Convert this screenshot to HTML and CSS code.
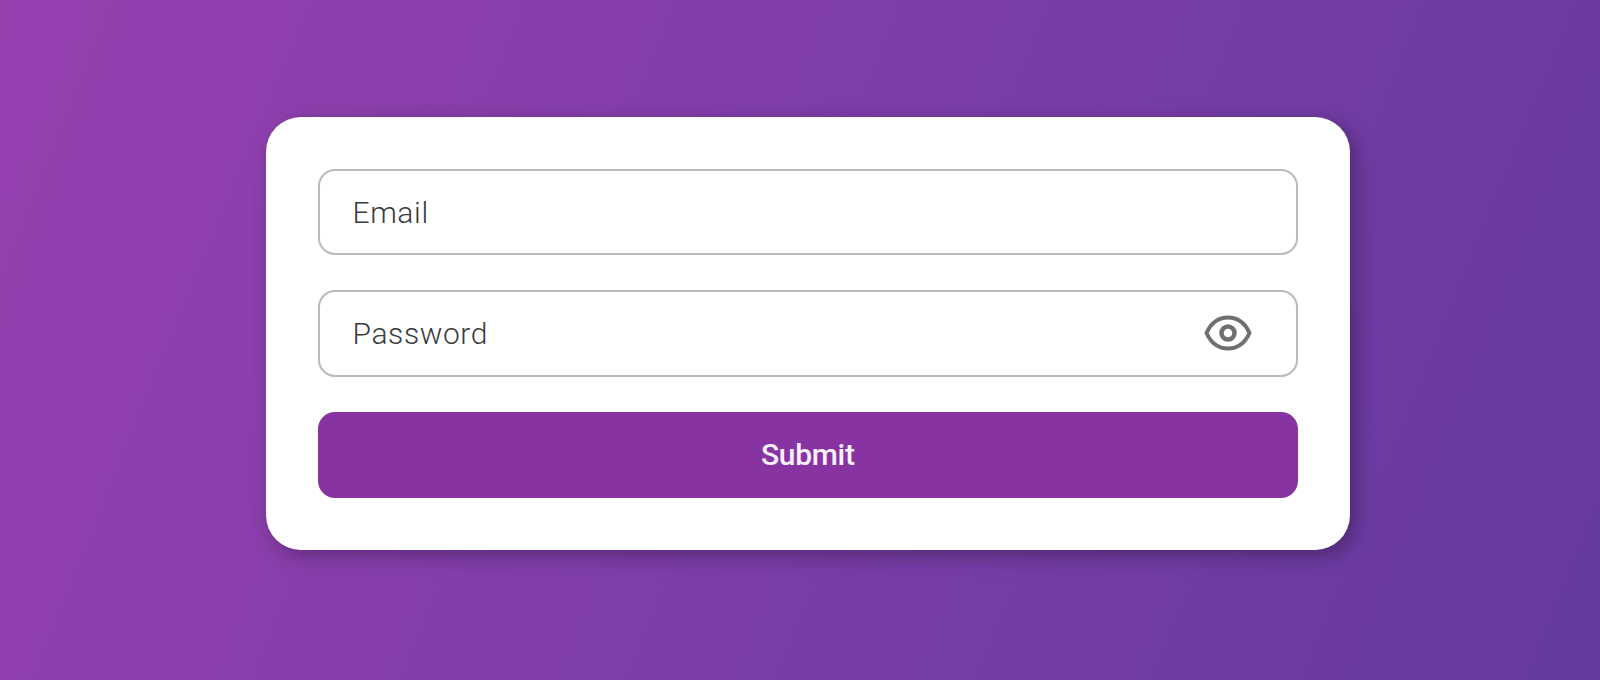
FILE: index.html
```
<!DOCTYPE html>
<html lang="en">
<head>
<meta charset="utf-8">
<title>Sign in</title>
<link rel="stylesheet" href="styles.css">
</head>
<body>
<form class="card">
  <div class="field"><span class="label">Email</span></div>
  <div class="field">
    <span class="label">Password</span>
    <svg class="eye" width="48" height="36" viewBox="0 0 48 36" fill="none" stroke="#707070" stroke-width="4">
      <path d="M2.500 18C7 8 14.500 2.500 24 2.500S41 8 45.500 18C41 28 33.500 33.500 24 33.500S7 28 2.500 18Z" stroke-linejoin="round"/>
      <circle cx="24" cy="18" r="6.500" stroke-width="4.500"/>
    </svg>
  </div>
  <button class="submit" type="button">Submit</button>
</form>
</body>
</html>
```

FILE: styles.css
```
* { box-sizing: border-box; }
body {
  margin: 0;
  height: 680px;
  overflow: hidden;
  display: flex;
  justify-content: center;
  align-items: flex-start;
  padding: 116.5px 0 0 15.5px;
  font-family: Roboto, sans-serif;
  background: linear-gradient(112deg, #9640b0, #643a9f);
}
.card {
  width: 1083.5px;
  height: 433.5px;
  padding: 52px;
  display: flex;
  flex-direction: column;
  gap: 35px;
  background: #fff;
  border-radius: 35px;
  box-shadow: 6px 6px 20px rgba(0, 0, 0, .3);
}
.field {
  height: 86.5px;
  flex: none;
  display: flex;
  align-items: center;
  justify-content: space-between;
  padding: 0 44px 0 32.5px;
  border: 2px solid #bababa;
  border-radius: 17px;
}
.label {
  padding-top: 1px;
  font-size: 30px;
  font-weight: 300;
  letter-spacing: 0.6px;
  color: #3c3c3c;
}
.submit {
  height: 86.5px;
  flex: none;
  border: 0;
  border-radius: 17px;
  background: #8734a2;
  color: #f8f0fa;
  font: 500 30px Roboto, sans-serif;
  letter-spacing: -0.3px;
}
```
